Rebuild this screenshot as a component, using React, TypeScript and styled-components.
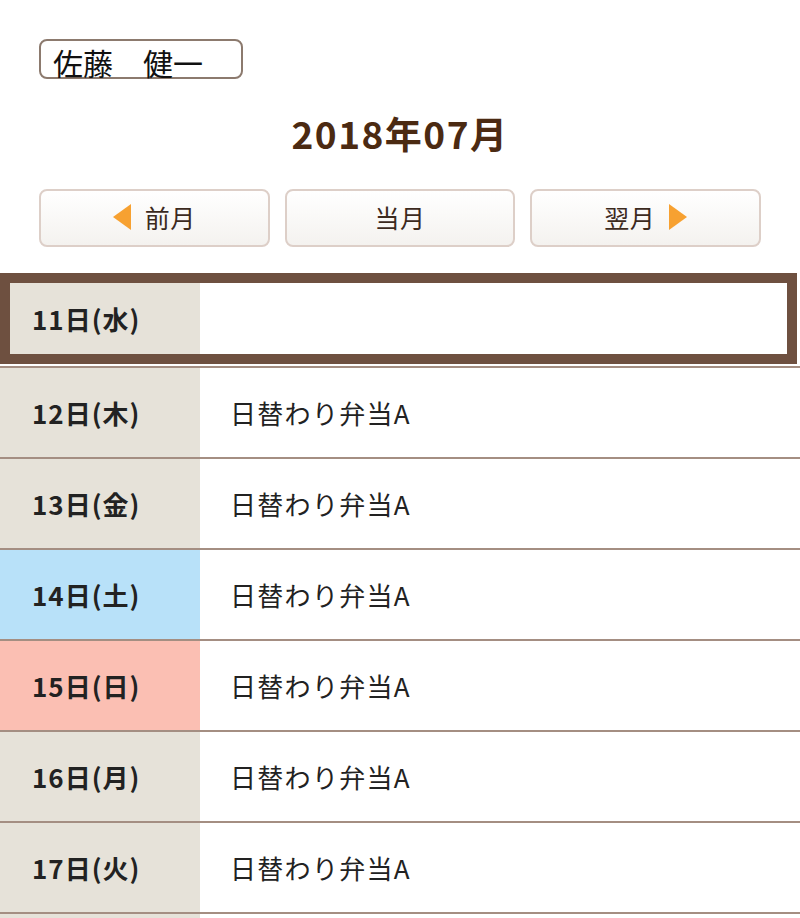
import styled, { createGlobalStyle } from "styled-components";

const GlobalStyle = createGlobalStyle`
  html, body {
    margin: 0;
    padding: 0;
    background: #ffffff;
  }
  body {
    font-family: "Noto Sans CJK JP", "Noto Sans", sans-serif;
    color: #222222;
  }
`;

const Page = styled.div`
  width: 800px;
  padding-top: 39px;
`;

const Header = styled.div`
  display: flex;
  flex-direction: column;
  padding: 0 39px;
`;

const NameBox = styled.div`
  box-sizing: border-box;
  width: 204px;
  height: 40px;
  padding: 6px 0 0 12px;
  border: 2px solid #8c7a6e;
  border-radius: 8px;
  font-size: 30px;
  line-height: 30px;
  color: #111111;
  white-space: pre;
`;

const MonthTitle = styled.h1`
  margin: 34px 0 0;
  text-align: center;
  font-size: 37px;
  line-height: 40px;
  font-weight: 700;
  letter-spacing: 1.5px;
  color: #4b2a12;
`;

const NavRow = styled.div`
  display: grid;
  grid-template-columns: repeat(3, 1fr);
  gap: 15px;
  margin-top: 36px;
`;

const NavButton = styled.button`
  box-sizing: border-box;
  height: 58px;
  display: flex;
  align-items: center;
  justify-content: center;
  gap: 14px;
  border: 2px solid #ddcfc8;
  border-radius: 8px;
  background: linear-gradient(#ffffff, #f4f2ef);
  font-family: inherit;
  font-size: 25px;
  letter-spacing: 0.5px;
  color: #3c2a1e;
  padding: 0 0 2px;
`;

const Arrow = ({ dir }: { dir: "left" | "right" }) => (
  <svg width="18" height="26" viewBox="0 0 18 26">
    <path
      d={dir === "left" ? "M18 0 L0 13 L18 26 Z" : "M0 0 L18 13 L0 26 Z"}
      fill="#f7a131"
    />
  </svg>
);

const Table = styled.div`
  margin-top: 26px;
  display: flex;
  flex-direction: column;
`;

const Row = styled.div`
  display: grid;
  grid-template-columns: 200px 1fr;
  height: 89px;
  border-bottom: 2px solid #a48e82;
`;

const SelectedWrap = styled.div`
  padding-bottom: 2px;
  border-bottom: 2px solid #a48e82;
`;

const SelectedFrame = styled.div`
  box-sizing: border-box;
  display: grid;
  grid-template-columns: 190px 1fr;
  height: 91px;
  margin-right: 3px;
  border: 10px solid #6e5040;
`;

const DateCell = styled.div<{ $kind: "weekday" | "sat" | "sun"; $inset?: boolean }>`
  display: flex;
  align-items: center;
  padding-left: ${(p) => (p.$inset ? "22px" : "32px")};
  background: ${(p) =>
    p.$kind === "sat" ? "#b8e1f9" : p.$kind === "sun" ? "#fbbfb3" : "#e6e2d9"};
  font-size: 26px;
  font-weight: 700;
  letter-spacing: 1px;
  color: #222222;
`;

const MenuCell = styled.div<{ $inset?: boolean }>`
  display: flex;
  align-items: center;
  padding-left: ${(p) => (p.$inset ? "20px" : "30px")};
  font-size: 26px;
  letter-spacing: 1.3px;
  color: #222222;
`;

type Day = { label: string; kind: "weekday" | "sat" | "sun"; menu: string };

const days: Day[] = [
  { label: "12日(木)", kind: "weekday", menu: "日替わり弁当A" },
  { label: "13日(金)", kind: "weekday", menu: "日替わり弁当A" },
  { label: "14日(土)", kind: "sat", menu: "日替わり弁当A" },
  { label: "15日(日)", kind: "sun", menu: "日替わり弁当A" },
  { label: "16日(月)", kind: "weekday", menu: "日替わり弁当A" },
  { label: "17日(火)", kind: "weekday", menu: "日替わり弁当A" },
  { label: "18日(水)", kind: "weekday", menu: "日替わり弁当A" },
];

export default function App() {
  return (
    <Page>
      <GlobalStyle />
      <Header>
        <NameBox>佐藤　健一</NameBox>
        <MonthTitle>2018年07月</MonthTitle>
        <NavRow>
          <NavButton>
            <Arrow dir="left" />
            前月
          </NavButton>
          <NavButton>当月</NavButton>
          <NavButton>
            翌月
            <Arrow dir="right" />
          </NavButton>
        </NavRow>
      </Header>

      <Table>
        {/* selected day */}
        <SelectedWrap>
          <SelectedFrame>
            <DateCell $kind="weekday" $inset>
              11日(水)
            </DateCell>
            <MenuCell $inset />
          </SelectedFrame>
        </SelectedWrap>

        {days.map((d) => (
          <Row key={d.label}>
            <DateCell $kind={d.kind}>{d.label}</DateCell>
            <MenuCell>{d.menu}</MenuCell>
          </Row>
        ))}
      </Table>
    </Page>
  );
}
